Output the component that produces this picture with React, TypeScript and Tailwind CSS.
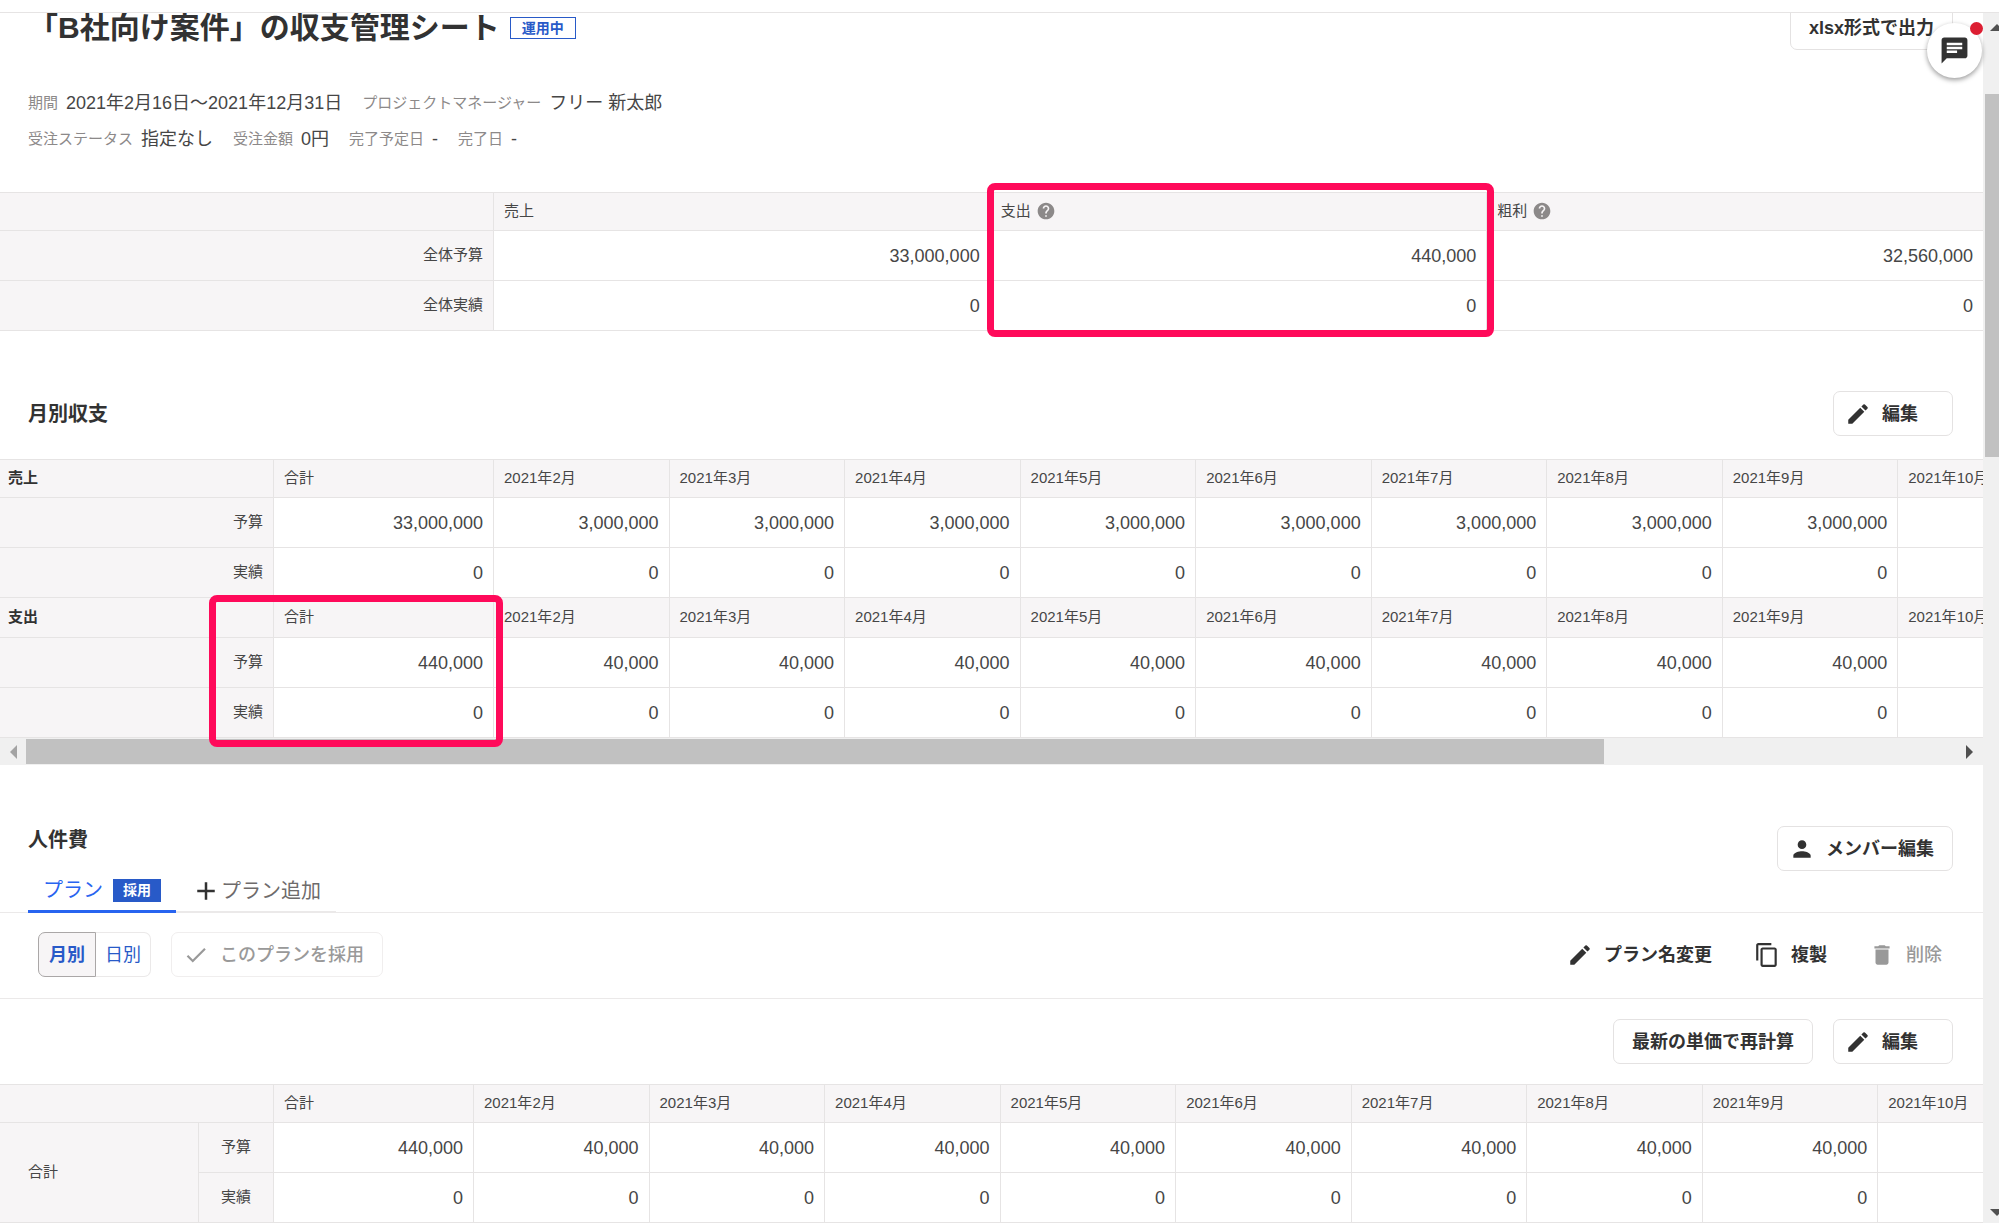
import React from "react";
import clsx from "clsx";
import {
  MdAdd,
  MdChat,
  MdCheck,
  MdContentCopy,
  MdDelete,
  MdEdit,
  MdHelp,
  MdPerson,
} from "react-icons/md";

const MONTHS = [2, 3, 4, 5, 6, 7, 8, 9, 10, 11, 12];

const summary = [
  { label: "全体予算", values: ["33,000,000", "440,000", "32,560,000"] },
  { label: "全体実績", values: ["0", "0", "0"] },
];

const monthly = [
  {
    title: "売上",
    rows: [
      { label: "予算", total: "33,000,000", month: "3,000,000" },
      { label: "実績", total: "0", month: "0" },
    ],
  },
  {
    title: "支出",
    rows: [
      { label: "予算", total: "440,000", month: "40,000" },
      { label: "実績", total: "0", month: "0" },
    ],
  },
];

const labor = [
  { label: "予算", total: "440,000", month: "40,000" },
  { label: "実績", total: "0", month: "0" },
];

const tableClass =
  "table-fixed border-separate border-spacing-0 border-t border-[#e6e4e4]";

type CellProps = React.ComponentProps<"th">;

const HeadCell = ({ className, ...props }: CellProps) => (
  <th
    scope="col"
    className={clsx(
      "border-b border-[#e6e4e4] bg-[#f7f5f6] p-0 px-[10px] pb-[2px] text-left text-[15px] leading-5 whitespace-nowrap",
      className
    )}
    {...props}
  />
);

const RowLabel = ({ className, ...props }: CellProps) => (
  <th
    scope="row"
    className={clsx(
      "h-[50px] border-b border-[#e6e4e4] bg-[#f7f5f6] p-0 px-[10px] pb-[2px] text-[15px] leading-5 font-normal text-[#464646]",
      className
    )}
    {...props}
  />
);

const NumberCell = ({ children }: { children: React.ReactNode }) => (
  <td className="h-[50px] border-b border-l border-[#e6e4e4] bg-white p-0 px-[10px] text-right text-[18px] leading-6 text-[#464646]">
    {children}
  </td>
);

const MonthHeads = () => (
  <>
    <HeadCell className="border-l font-normal text-[#464646]">合計</HeadCell>
    {MONTHS.map((m) => (
      <HeadCell key={m} className="border-l font-normal text-[#464646]">
        2021年{m}月
      </HeadCell>
    ))}
  </>
);

const MonthValues = ({ total, month }: { total: string; month: string }) => (
  <>
    <NumberCell>{total}</NumberCell>
    {MONTHS.map((m) => (
      <NumberCell key={m}>{month}</NumberCell>
    ))}
  </>
);

type ButtonProps = React.ComponentProps<"button"> & { icon?: React.ReactNode };

const OutlineButton = ({ icon, className, children, ...props }: ButtonProps) => (
  <button
    type="button"
    className={clsx(
      "flex h-[45px] shrink-0 items-center gap-[11px] rounded-[7px] border border-[#e4e2e2] bg-white pr-[18px] text-[18px] leading-6 font-bold whitespace-nowrap",
      icon ? "pl-[11px]" : "pl-[18px]",
      className
    )}
    {...props}
  >
    {icon}
    {children}
  </button>
);

const TextButton = ({ icon, className, children, ...props }: ButtonProps) => (
  <button
    type="button"
    className={clsx(
      "flex h-[45px] items-center gap-[11px] px-[11px] text-[18px] leading-6 font-bold whitespace-nowrap",
      className
    )}
    {...props}
  >
    {icon}
    {children}
  </button>
);

const MetaItem = ({ label, value }: { label: string; value: string }) => (
  <div className="flex items-center gap-2">
    <dt className="text-[15px] leading-6 text-[#8c8989]">{label}</dt>
    <dd className="text-[18px] leading-6 text-[#464646]">{value}</dd>
  </div>
);

const Highlight = ({ className }: { className: string }) => (
  <div
    className={clsx(
      "pointer-events-none absolute z-10 rounded-[8px] border-[7px] border-[#ff0a5a]",
      className
    )}
  />
);

const HorizontalScrollbar = () => (
  <div className="flex h-[27px] items-center bg-[#f0f0f0]">
    <div className="flex w-[26px] justify-center">
      <svg width="7" height="14" viewBox="0 0 7 14" fill="#a3a3a3">
        <path d="M7 0v14L0 7z" />
      </svg>
    </div>
    <div className="flex-1">
      <div className="h-[25px] w-[81.8%] bg-[#c1c1c1]" />
    </div>
    <div className="flex w-[28px] justify-center">
      <svg width="7" height="14" viewBox="0 0 7 14" fill="#505050">
        <path d="M0 0v14l7-7z" />
      </svg>
    </div>
  </div>
);

const VerticalScrollbar = () => (
  <div className="flex w-4 shrink-0 flex-col items-end overflow-hidden bg-[#f0f0f0]">
    <svg className="mt-[11px]" width="9" height="7" viewBox="0 0 9 7" fill="#505050">
      <path d="M0 7l7-7 2 2v5z" />
    </svg>
    <div className="mt-[63px] h-[30%] w-[14px] bg-[#c1c1c1]" />
    <svg className="mt-auto mb-[7px]" width="9" height="7" viewBox="0 0 9 7" fill="#505050">
      <path d="M0 0l7 7 2-2V0z" />
    </svg>
  </div>
);

const App = () => {
  return (
    <div className="flex h-screen flex-col overflow-hidden bg-white font-['Liberation_Sans','Noto_Sans_CJK_JP',sans-serif] text-[#323232]">
      <header className="relative z-10 h-[13px] shrink-0 border-b border-[#e6e4e4] bg-white" />

      <div className="flex min-h-0 flex-1">
        <main className="min-w-0 flex-1 overflow-hidden">
          <div className="-mt-2 flex h-[45px] items-center justify-between pr-[30px] pl-7">
            <div className="flex items-center gap-[10px]">
              <h1 className="text-[30px] leading-10 font-bold">
                「B社向け案件」の収支管理シート
              </h1>
              <span className="border border-[#285ac8] px-[11px] text-[14px] leading-5 font-bold text-[#285ac8]">
                運用中
              </span>
            </div>
            <OutlineButton>xlsx形式で出力</OutlineButton>
          </div>

          <div className="mt-[35px] pl-7">
            <dl className="flex h-9 items-center gap-5">
              <MetaItem label="期間" value="2021年2月16日～2021年12月31日" />
              <MetaItem label="プロジェクトマネージャー" value="フリー 新太郎" />
            </dl>
            <dl className="flex h-9 items-center gap-5">
              <MetaItem label="受注ステータス" value="指定なし" />
              <MetaItem label="受注金額" value="0円" />
              <MetaItem label="完了予定日" value="-" />
              <MetaItem label="完了日" value="-" />
            </dl>
          </div>

          <section className="relative mt-[35px]">
            <table className={clsx(tableClass, "w-full")}>
              <colgroup>
                <col className="w-[493px]" />
                <col />
                <col />
                <col />
              </colgroup>
              <thead>
                <tr className="h-[38px]">
                  <HeadCell />
                  <HeadCell className="border-l font-normal text-[#464646]">売上</HeadCell>
                  <HeadCell className="border-l font-normal text-[#464646]">
                    <span className="flex items-center gap-[5px]">
                      支出
                      <MdHelp size={20} color="#8c8989" />
                    </span>
                  </HeadCell>
                  <HeadCell className="border-l font-normal text-[#464646]">
                    <span className="flex items-center gap-[5px]">
                      粗利
                      <MdHelp size={20} color="#8c8989" />
                    </span>
                  </HeadCell>
                </tr>
              </thead>
              <tbody>
                {summary.map((row) => (
                  <tr key={row.label}>
                    <RowLabel className="text-right">{row.label}</RowLabel>
                    {row.values.map((value, i) => (
                      <NumberCell key={i}>{value}</NumberCell>
                    ))}
                  </tr>
                ))}
              </tbody>
            </table>
            <Highlight className="-top-[9px] -bottom-[6px] left-[calc(50%-5px)] w-[calc(25%+12px)]" />
          </section>

          <section>
            <div className="mt-[60px] flex items-center justify-between pr-[30px] pl-7">
              <h2 className="text-[20px] leading-7 font-bold">月別収支</h2>
              <OutlineButton icon={<MdEdit size={26} />} className="min-w-[120px]">
                編集
              </OutlineButton>
            </div>

            <div className="relative mt-[23px]">
              <div className="overflow-x-auto [scrollbar-width:none]">
                <table className={clsx(tableClass, "w-[2424px]")}>
                  <colgroup>
                    <col className="w-[273px]" />
                    <col className="w-[220px]" />
                    {MONTHS.map((m) => (
                      <col key={m} />
                    ))}
                  </colgroup>
                  {monthly.map((group, i) => (
                    <tbody key={group.title}>
                      <tr className={i === 0 ? "h-[38px]" : "h-10"}>
                        <HeadCell className="pl-2 font-bold">{group.title}</HeadCell>
                        <MonthHeads />
                      </tr>
                      {group.rows.map((row) => (
                        <tr key={row.label}>
                          <RowLabel className="text-right">{row.label}</RowLabel>
                          <MonthValues total={row.total} month={row.month} />
                        </tr>
                      ))}
                    </tbody>
                  ))}
                </table>
              </div>
              <HorizontalScrollbar />
              <Highlight className="bottom-[18px] left-[209px] h-[152px] w-[294px]" />
            </div>
          </section>

          <section>
            <div className="mt-[61px] flex justify-between border-b border-[#ebe9e9] pr-[30px] pl-7">
              <div>
                <h2 className="text-[20px] leading-7 font-bold">人件費</h2>
                <div className="mt-3 -mb-px flex" role="tablist">
                  <button
                    type="button"
                    role="tab"
                    aria-selected="true"
                    className="flex h-[47px] items-center gap-[10px] border-b-[3px] border-[#2864f0] px-[15px] pt-1 text-[20px] leading-7 text-[#2864f0]"
                  >
                    プラン
                    <span className="bg-[#285ac8] px-[10px] text-[14px] leading-[23px] font-bold text-white">
                      採用
                    </span>
                  </button>
                  <button
                    type="button"
                    role="tab"
                    aria-selected="false"
                    className="flex h-[47px] items-center border-b-2 border-[#ebe9e9] px-[15px] pt-1 text-[20px] leading-7 text-[#6e6b6b]"
                  >
                    <MdAdd size={30} color="#323232" />
                    プラン追加
                  </button>
                </div>
              </div>
              <OutlineButton icon={<MdPerson size={26} />}>メンバー編集</OutlineButton>
            </div>

            <div className="flex items-center justify-between border-b border-[#ebe9e9] pt-[19px] pr-[30px] pb-[21px] pl-[38px]">
              <div className="flex gap-5">
                <div className="flex text-[18px] leading-6 text-[#285ac8]">
                  <button
                    type="button"
                    aria-pressed="true"
                    className="h-[45px] rounded-l-[7px] border border-[#aaa7a7] bg-[#f7f5f6] px-[10px] font-bold"
                  >
                    月別
                  </button>
                  <button
                    type="button"
                    aria-pressed="false"
                    className="h-[45px] rounded-r-[7px] border border-l-0 border-[#ebe9e9] px-[9px]"
                  >
                    日別
                  </button>
                </div>
                <OutlineButton
                  icon={<MdCheck size={26} />}
                  className="border-[#f0eeee] font-medium text-[#999999]"
                  disabled
                >
                  このプランを採用
                </OutlineButton>
              </div>
              <div className="flex gap-5">
                <TextButton icon={<MdEdit size={26} />}>プラン名変更</TextButton>
                <TextButton icon={<MdContentCopy size={26} />}>複製</TextButton>
                <TextButton
                  icon={<MdDelete size={26} />}
                  className="font-medium text-[#999999]"
                  disabled
                >
                  削除
                </TextButton>
              </div>
            </div>

            <div className="flex justify-end gap-5 py-5 pr-[30px]">
              <OutlineButton>最新の単価で再計算</OutlineButton>
              <OutlineButton icon={<MdEdit size={26} />} className="min-w-[120px]">
                編集
              </OutlineButton>
            </div>

            <div className="overflow-x-auto [scrollbar-width:none]">
              <table className={clsx(tableClass, "w-[2404px]")}>
                <colgroup>
                  <col className="w-[198px]" />
                  <col className="w-[75px]" />
                  <col className="w-[200px]" />
                  {MONTHS.map((m) => (
                    <col key={m} />
                  ))}
                </colgroup>
                <thead>
                  <tr className="h-[38px]">
                    <HeadCell colSpan={2} />
                    <MonthHeads />
                  </tr>
                </thead>
                <tbody>
                  {labor.map((row, i) => (
                    <tr key={row.label}>
                      {i === 0 && (
                        <RowLabel rowSpan={2} className="pl-7 text-left">
                          合計
                        </RowLabel>
                      )}
                      <RowLabel className="border-l text-center">{row.label}</RowLabel>
                      <MonthValues total={row.total} month={row.month} />
                    </tr>
                  ))}
                </tbody>
              </table>
            </div>
          </section>
        </main>

        <VerticalScrollbar />
      </div>

      {/* floating chat launcher */}
      <button
        type="button"
        aria-label="チャット"
        className="fixed top-[23px] right-[17px] z-20 flex size-[55px] items-center justify-center rounded-full bg-white shadow-[0_2px_5px_rgba(0,0,0,0.4)]"
      >
        <MdChat size={31} />
        <span className="absolute -top-px -right-[1px] size-[13px] rounded-full bg-[#dc1e32]" />
      </button>
    </div>
  );
};

export default App;
